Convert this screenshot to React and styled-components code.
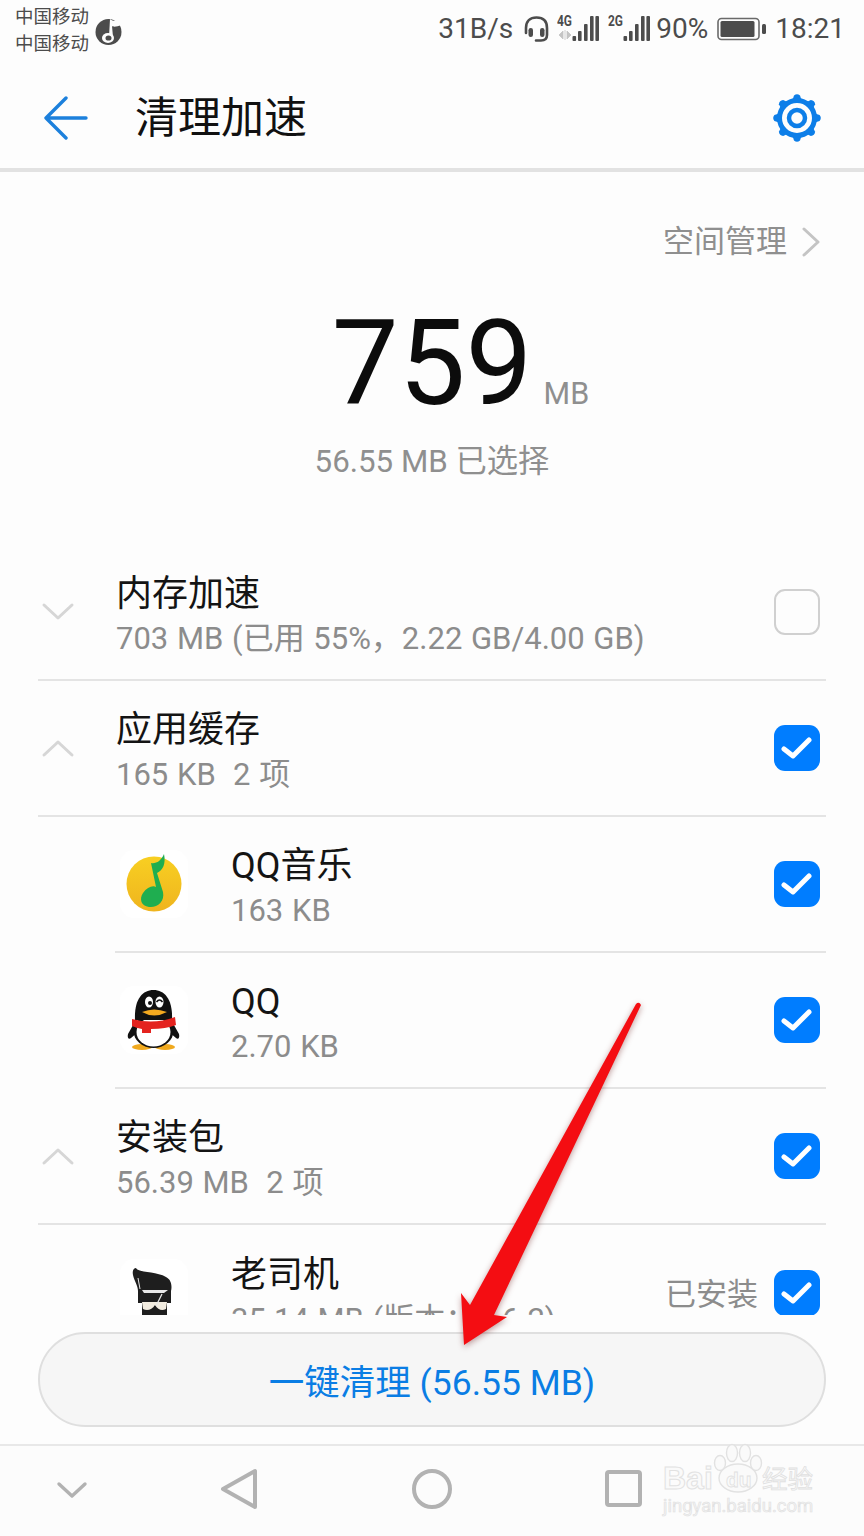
import styled, { createGlobalStyle } from 'styled-components';

const GlobalStyle = createGlobalStyle`
  html, body { margin: 0; padding: 0; background: #fdfdfd; }
  * { box-sizing: border-box; }
`;

const Page = styled.div`
  position: relative;
  width: 864px;
  height: 1536px;
  overflow: hidden;
  display: flex;
  flex-direction: column;
  background: #fdfdfd;
  font-family: Roboto, "Noto Sans CJK SC", sans-serif;
`;

const StatusBar = styled.div`
  height: 72px;
  flex: none;
  display: flex;
  justify-content: space-between;
  padding: 3px 19px 0 15px;
  color: #4c4c4c;
`;
const CarrierGroup = styled.div`
  display: flex;
  align-items: center;
  gap: 6px;
  height: 54px;
  padding-top: 2px;
`;
const Carrier = styled.div`
  font-size: 18.5px;
  line-height: 27px;
`;
const StatusRight = styled.div`
  display: flex;
  align-items: center;
  height: 52px;
`;
const StatusText = styled.span`
  font-size: ${(p) => p.$size || 28}px;
  margin-left: ${(p) => p.$gap || 0}px;
  line-height: 32px;
  white-space: nowrap;
`;
const StatusIcon = styled.svg`
  display: block;
  flex: none;
  margin-left: ${(p) => p.$gap || 0}px;
`;

const Header = styled.div`
  height: 100px;
  flex: none;
  display: flex;
  align-items: center;
  padding: 0 42px 4px 44px;
  border-bottom: 4px solid #e2e2e2;
`;
const Title = styled.div`
  flex: 1;
  margin-left: 47px;
  font-size: 43px;
  line-height: 50px;
  color: #111;
`;

const Summary = styled.div`
  height: 373px;
  flex: none;
  display: flex;
  flex-direction: column;
  align-items: center;
  padding-top: 49px;
`;
const SpaceLink = styled.div`
  align-self: flex-end;
  display: flex;
  align-items: center;
  gap: 15px;
  padding-right: 44px;
  font-size: 31px;
  line-height: 42px;
  color: #8f8f8f;
`;
const BigRow = styled.div`
  display: flex;
  align-items: baseline;
  margin-top: 36px;
  padding-left: 57px;
`;
const BigNumber = styled.div`
  font-size: 119px;
  line-height: 130px;
  font-weight: 400;
  color: #0c0c0c;
`;
const Unit = styled.div`
  font-size: 30.5px;
  margin-left: 11px;
  color: #8f8f8f;
`;
const Selected = styled.div`
  font-size: 31.3px;
  line-height: 42px;
  margin-top: 12px;
  color: #8f8f8f;
`;

const List = styled.div`
  height: 770px;
  flex: none;
  overflow: hidden;
`;
const Row = styled.div`
  height: 136px;
  flex: none;
  display: flex;
  align-items: center;
  margin: 0 38px 0 ${(p) => (p.$app ? 115 : 38)}px;
  padding-right: 6px;
  border-bottom: ${(p) => (p.$last ? 'none' : '2px solid #e4e4e4')};
`;
const Lead = styled.div`
  width: 78px;
  flex: none;
  display: flex;
  padding-left: 3px;
`;
const AppTile = styled.div`
  width: 68px;
  height: 68px;
  flex: none;
  margin: 0 43px 0 5px;
  border-radius: 14px;
  background: #fff;
  overflow: hidden;
`;
const RowText = styled.div`
  flex: 1;
  min-width: 0;
  padding-top: 8px;
  white-space: nowrap;
`;
const RowTitle = styled.div`
  font-size: 36px;
  line-height: 46px;
  color: #141414;
`;
const RowSub = styled.div`
  font-size: 31px;
  line-height: 44px;
  word-spacing: 1px;
  white-space: pre;
  color: #8c8c8c;
`;
const RowNote = styled.div`
  font-size: 31px;
  margin: 0 16px 4px 0;
  color: #8c8c8c;
`;
const Box = styled.div`
  width: 46px;
  height: 46px;
  flex: none;
  display: flex;
  align-items: center;
  justify-content: center;
  border-radius: 11px;
  background: ${(p) => (p.$checked ? '#007dff' : '#fdfdfd')};
  border: ${(p) => (p.$checked ? 'none' : '2.5px solid #d0d0d0')};
`;

const Footer = styled.div`
  height: 131px;
  flex: none;
  padding: 17px 38px 0;
  border-bottom: 2px solid #e8e8e8;
`;
const CleanButton = styled.div`
  height: 95px;
  display: flex;
  align-items: center;
  justify-content: center;
  border-radius: 48px;
  border: 2px solid #dfdfdf;
  background: #f6f6f6;
  font-size: 35.5px;
  color: #0a7de4;
`;

const NavBar = styled.div`
  flex: 1;
  display: grid;
  grid-template-columns: 144px 192px 192px 192px;
  align-items: center;
  justify-items: center;
  padding-bottom: 4px;
  background: #fcfcfc;
`;

const ArrowMark = styled.svg`
  position: absolute;
  left: 450px;
  top: 995px;
  filter: drop-shadow(0 2px 3px rgba(90, 0, 0, 0.4));
`;

const Watermark = styled.div`
  position: absolute;
  left: 662px;
  top: 1442px;
  width: 156px;
  height: 80px;
`;
const WatermarkPaw = styled.svg`
  position: absolute;
  left: 50px;
  top: 0;
`;
const WatermarkBrand = styled.div`
  position: absolute;
  left: 1px;
  top: 18px;
  font-size: 32px;
  line-height: 36px;
  font-family: "Liberation Sans", sans-serif;
  font-weight: 700;
  color: #fafafa;
  -webkit-text-stroke: 1px #e2e2e2;
`;
const WatermarkDu = styled.div`
  position: absolute;
  left: 64px;
  top: 26px;
  font-size: 21px;
  line-height: 24px;
  font-family: "Liberation Sans", sans-serif;
  font-weight: 700;
  color: #fafafa;
  -webkit-text-stroke: 0.8px #e0e0e0;
`;
const WatermarkCn = styled.div`
  position: absolute;
  left: 100px;
  top: 22px;
  font-size: 25.5px;
  line-height: 30px;
  white-space: nowrap;
  color: #fafafa;
  -webkit-text-stroke: 0.8px #e0e0e0;
`;
const WatermarkUrl = styled.div`
  position: absolute;
  left: 1px;
  top: 53px;
  font-size: 18.5px;
  line-height: 22px;
  white-space: nowrap;
  color: #f4f4f4;
  -webkit-text-stroke: 0.6px #e0e0e0;
`;

const Chevron = ({ up }) => (
  <svg width="34" height="20" viewBox="0 0 34 20" fill="none">
    <path
      d={up ? 'M3 17 L17 4 L31 17' : 'M3 3 L17 16 L31 3'}
      stroke="#d6d6d6"
      strokeWidth="3"
      strokeLinecap="round"
      strokeLinejoin="round"
    />
  </svg>
);

const Check = () => (
  <svg width="32" height="26" viewBox="0 0 32 26" fill="none">
    <path d="M3 14 L12 21 L28 5" stroke="#fff" strokeWidth="5" strokeLinecap="round" strokeLinejoin="round" />
  </svg>
);

const MusicGlobe = () => (
  <svg width="27" height="30" viewBox="0 0 27 30">
    <circle cx="13.5" cy="16" r="13" fill="#4c4c4c" />
    <path d="M15 3 C18 6 22 5 25 2 L26 9 C22 11 18 11 17 10 L18 21 H14 Z" fill="#fdfdfd" />
    <ellipse cx="13" cy="22" rx="6" ry="5" fill="#fdfdfd" />
    <ellipse cx="13.5" cy="22" rx="3" ry="2.6" fill="#4c4c4c" />
  </svg>
);

const Headset = () => (
  <StatusIcon $gap={10} width="27" height="28" viewBox="0 0 27 28" fill="none">
    <path d="M3 18 V13 C3 6 7 2.5 13.5 2.5 C20 2.5 24 6 24 13 V20 C24 24 22 25.5 18 25.5 H13" stroke="#4c4c4c" strokeWidth="2.6" strokeLinecap="round" />
    <rect x="5.5" y="13" width="4.5" height="9" rx="2.2" fill="#4c4c4c" />
    <rect x="17" y="13" width="4.5" height="9" rx="2.2" fill="#4c4c4c" />
  </StatusIcon>
);

const Signal = ({ label, gap, traffic }) => (
  <StatusIcon $gap={gap} width="43" height="30" viewBox="0 0 43 30">
    <text x="0" y="11.5" fontSize="14" fontWeight="700" fontFamily="Roboto, sans-serif" textLength="15" lengthAdjust="spacingAndGlyphs" fill="#4c4c4c">{label}</text>
    {traffic && <path d="M2 21 L6 17 V25 Z M10 17 L14 21 L10 25 Z M8 16 V26" fill="#c4c4c4" stroke="#c4c4c4" strokeWidth="0.8" />}
    <rect x="15.5" y="22" width="3.6" height="5" rx="1" fill="#4c4c4c" />
    <rect x="21" y="17" width="3.6" height="10" rx="1" fill="#4c4c4c" />
    <rect x="27" y="10" width="3.6" height="17" rx="1" fill="#4c4c4c" />
    <rect x="33" y="2" width="3.6" height="25" rx="1" fill="#4c4c4c" />
    <rect x="38.4" y="2" width="3.6" height="25" rx="1" fill="#4c4c4c" />
  </StatusIcon>
);

const Battery = () => (
  <StatusIcon $gap={9} width="50" height="24" viewBox="0 0 50 24">
    <rect x="1" y="1.5" width="41" height="21" rx="3.5" fill="none" stroke="#6a6a6a" strokeWidth="1.6" />
    <rect x="3.5" y="4" width="34" height="16" rx="1.5" fill="#4c4c4c" />
    <rect x="45" y="7" width="4" height="10" rx="1.5" fill="#4c4c4c" />
  </StatusIcon>
);

const BackArrow = () => (
  <svg width="44" height="44" viewBox="0 0 44 44" fill="none">
    <path d="M22 2 L2 22 L22 42 M2 22 H42" stroke="#1c80dc" strokeWidth="3.4" strokeLinecap="round" strokeLinejoin="round" />
  </svg>
);

const Gear = () => (
  <svg width="50" height="50" viewBox="0 0 50 50" fill="none">
    {[0, 45, 90, 135, 180, 225, 270, 315].map((a) => (
      <path key={a} d="M20.5 7 L22 2.4 Q25 0 28 2.4 L29.5 7 Z" fill="#0d7ee8" transform={`rotate(${a} 25 25)`} />
    ))}
    <circle cx="25" cy="25" r="17.5" stroke="#0d7ee8" strokeWidth="5" />
    <circle cx="25" cy="25" r="8" stroke="#0d7ee8" strokeWidth="4.5" />
  </svg>
);

const QQMusicLogo = () => (
  <svg width="68" height="68" viewBox="0 0 68 68">
    <defs>
      <linearGradient id="qqmusicDisc" x1="0" y1="0" x2="0" y2="1">
        <stop offset="0" stopColor="#f8cf22" />
        <stop offset="1" stopColor="#efb41e" />
      </linearGradient>
    </defs>
    <circle cx="34" cy="34" r="27.5" fill="url(#qqmusicDisc)" />
    <path d="M31 13 C36 14 41 11 44 4 C46 14 43 20 37 23 L43 42 C45 52 37 58 29 57 C21 56 19 49 23 43 C27 37 33 35 36 37 Z" fill="#1fae50" />
  </svg>
);

const QQLogo = () => (
  <svg width="68" height="68" viewBox="0 0 68 68">
    <path d="M17 32 L8 48 C7 52 9 54 11 52 L18 46 Z M50 32 L59 48 C60 52 58 54 56 52 L49 46 Z" fill="#111" />
    <ellipse cx="22" cy="61" rx="10" ry="3" fill="#f0a91e" />
    <ellipse cx="45" cy="61" rx="10" ry="3" fill="#f0a91e" />
    <ellipse cx="33.5" cy="45" rx="20" ry="17" fill="#111" />
    <ellipse cx="33.5" cy="46" rx="17" ry="14.5" fill="#fff" />
    <path d="M15 34 C14 14 22 4 33.5 4 C45 4 53 14 52 34 Z" fill="#111" />
    <ellipse cx="29" cy="16" rx="4" ry="5.5" fill="#fff" />
    <ellipse cx="39.5" cy="16" rx="4" ry="5.5" fill="#fff" />
    <circle cx="30" cy="17" r="2" fill="#111" />
    <path d="M36.5 16 Q39.5 12 42.5 16" stroke="#111" strokeWidth="1.6" fill="none" />
    <path d="M22 26 Q34 21 47 26 Q34 33 22 26 Z" fill="#f4a91f" />
    <path d="M12 33 Q34 39 55 31 L56 39 Q46 43 31 43 L31 47 L22 47 L22 43 Q16 42 12 40 Z" fill="#e4231f" />
  </svg>
);

const DriverLogo = () => (
  <svg width="68" height="68" viewBox="0 0 68 68">
    <path d="M13 16 C12 11 14 9 16 9 C18 14 36 12 46 18 C52 21 52 28 51 32 H18 C18 27 14 21 13 16 Z" fill="#1e1e1e" />
    <path d="M18 19 L20 30" stroke="#e8e8e8" strokeWidth="1" />
    <rect x="18" y="32" width="33" height="12" fill="#1e1e1e" />
    <path d="M22 31 H48 L44 34 H24 Z" fill="#e8e8e8" />
    <rect x="22" y="44" width="25" height="24" fill="#1e1e1e" />
    <path d="M22 43 H47 L46 50 C42 52 38 51 35 46 C32 51 27 52 23 50 Z" fill="#f2ece0" />
    <path d="M42 35 L36 47" stroke="#e8e8e8" strokeWidth="1.2" />
  </svg>
);

const NavIcon = ({ children }) => (
  <svg width="48" height="48" viewBox="0 0 48 48" fill="none" stroke="#b2b2b2" strokeWidth="4" strokeLinecap="round" strokeLinejoin="round">
    {children}
  </svg>
);

const rows = [
  { id: 'memory', title: '内存加速', sub: '703 MB (已用 55%，2.22 GB/4.00 GB)', chevron: 'down' },
  { id: 'cache', title: '应用缓存', sub: '165 KB  2 项', chevron: 'up', checked: true },
  { id: 'qqmusic', title: 'QQ音乐', sub: '163 KB', logo: <QQMusicLogo />, checked: true },
  { id: 'qq', title: 'QQ', sub: '2.70 KB', logo: <QQLogo />, checked: true },
  { id: 'apk', title: '安装包', sub: '56.39 MB  2 项', chevron: 'up', checked: true },
  { id: 'driver', title: '老司机', sub: '35.14 MB (版本：6.6.2)', logo: <DriverLogo />, note: '已安装', checked: true, last: true },
];

const App = () => {
  return (
    <Page>
      <GlobalStyle />
      <StatusBar>
        <CarrierGroup>
          <Carrier>中国移动<br />中国移动</Carrier>
          <MusicGlobe />
        </CarrierGroup>
        <StatusRight>
          <StatusText>31B/s</StatusText>
          <Headset />
          <Signal label="4G" gap={7} traffic />
          <Signal label="2G" gap={8} />
          <StatusText $gap={5}>90%</StatusText>
          <Battery />
          <StatusText $gap={8}>18:21</StatusText>
        </StatusRight>
      </StatusBar>

      <Header>
        <BackArrow />
        <Title>清理加速</Title>
        <Gear />
      </Header>

      <Summary>
        <SpaceLink>
          空间管理
          <svg width="18" height="30" viewBox="0 0 18 30" fill="none">
            <path d="M2 2 L16 15 L2 28" stroke="#c4c4c4" strokeWidth="3" strokeLinecap="round" strokeLinejoin="round" />
          </svg>
        </SpaceLink>
        <BigRow>
          <BigNumber>759</BigNumber>
          <Unit>MB</Unit>
        </BigRow>
        <Selected>56.55 MB 已选择</Selected>
      </Summary>

      <List>
        {rows.map((row) => (
          <Row key={row.id} $app={Boolean(row.logo)} $last={row.last}>
            {row.logo ? (
              <AppTile>{row.logo}</AppTile>
            ) : (
              <Lead><Chevron up={row.chevron === 'up'} /></Lead>
            )}
            <RowText>
              <RowTitle>{row.title}</RowTitle>
              <RowSub>{row.sub}</RowSub>
            </RowText>
            {row.note && <RowNote>{row.note}</RowNote>}
            <Box $checked={row.checked}>{row.checked && <Check />}</Box>
          </Row>
        ))}
      </List>

      <Footer>
        <CleanButton>一键清理 (56.55 MB)</CleanButton>
      </Footer>

      <NavBar>
        <NavIcon><path d="M11 19 L24 31 L37 19" strokeWidth="3.4" /></NavIcon>
        <NavIcon><path d="M7 24 L39 6 V42 Z" /></NavIcon>
        <NavIcon><circle cx="24" cy="24" r="18" /></NavIcon>
        <NavIcon><rect x="7" y="7" width="33" height="33" rx="2" /></NavIcon>
      </NavBar>

      <Watermark>
        <WatermarkPaw width="62" height="60" viewBox="0 0 62 60" fill="#fafafa" stroke="#e2e2e2" strokeWidth="1.4">
          <ellipse cx="8" cy="21" rx="5.5" ry="7.5" />
          <ellipse cx="20" cy="11" rx="5.5" ry="8.5" />
          <ellipse cx="33" cy="11" rx="5.5" ry="8.5" />
          <ellipse cx="44" cy="21" rx="5.5" ry="7.5" />
          <ellipse cx="26" cy="36" rx="19" ry="14" />
        </WatermarkPaw>
        <WatermarkBrand>Bai</WatermarkBrand>
        <WatermarkDu>du</WatermarkDu>
        <WatermarkCn>经验</WatermarkCn>
        <WatermarkUrl>jingyan.baidu.com</WatermarkUrl>
      </Watermark>

      <ArrowMark width="200" height="360" viewBox="450 995 200 360">
        <path d="M636 1004 Q639 1001 641 1005 L494 1315 L507 1317 L464 1345 L461 1293 L470 1305 Z" fill="#f40d12" />
      </ArrowMark>
    </Page>
  );
};

export default App;
